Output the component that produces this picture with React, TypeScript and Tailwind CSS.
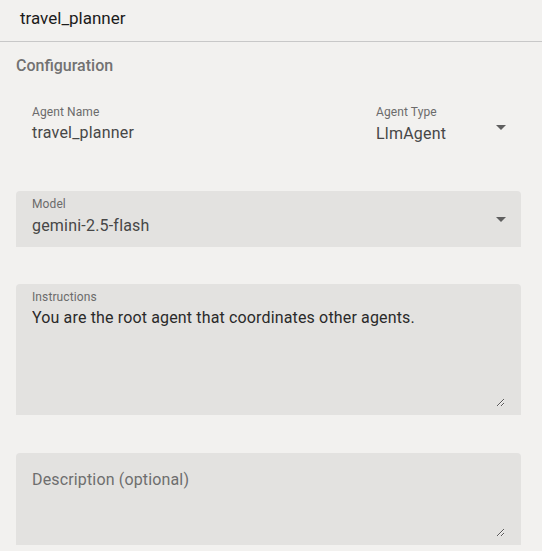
import type { ReactNode } from "react";

function Caret() {
  return (
    <svg width="10" height="5" viewBox="0 0 10 5" className="shrink-0">
      <path d="M0 0h10L5 5z" fill="#5f5f5f" />
    </svg>
  );
}

function SelectField({
  label,
  value,
  filled = false,
  className = "",
}: {
  label: string;
  value: string;
  filled?: boolean;
  className?: string;
}) {
  return (
    <div
      className={`h-14 flex items-center pl-4 pr-[15px] rounded-t ${
        filled ? "bg-[#e3e2e0]" : ""
      } ${className}`}
    >
      <div className="flex-1 min-w-0 self-start pt-[5px]">
        <div className="text-[12px] leading-4 text-[#6b6b6b] tracking-[0.1px]">{label}</div>
        <div className="mt-[2px] text-[16px] leading-6 text-[#474747] tracking-[0.2px]">
          {value}
        </div>
      </div>
      <Caret />
    </div>
  );
}

function TextField({ label, value }: { label: string; value: string }) {
  return (
    <div className="pl-4 pr-4 rounded-t">
      <div className="pt-[5px] text-[12px] leading-4 text-[#6b6b6b] tracking-[0.1px]">{label}</div>
      <div className="mt-[1px] text-[16px] leading-6 text-[#474747] tracking-[0.2px]">{value}</div>
    </div>
  );
}

function AreaField({
  label,
  children,
}: {
  label?: string;
  children: ReactNode;
}) {
  return (
    <div className="bg-[#e3e2e0] rounded-t px-4 pb-2 flex flex-col">
      {label && (
        <div className="pt-[5px] text-[12px] leading-4 text-[#6b6b6b] tracking-[0.1px]">{label}</div>
      )}
      {children}
    </div>
  );
}

export default function App() {
  return (
    <div className="min-h-screen bg-[#f2f1ef] font-['Roboto',sans-serif]">
      <div className="h-[42px] border-b border-[#c8c8c8] pl-5 pt-[6px]">
        <span className="text-[17px] leading-6 text-[#1b1b1b]">travel_planner</span>
      </div>

      <div className="pl-4 pr-[21px] pt-3">
        <div className="text-[16px] leading-6 font-medium text-[#727272]">
          Configuration
        </div>

        <div className="mt-[21px] flex gap-4 h-14">
          <div className="flex-1">
            <TextField label="Agent Name" value="travel_planner" />
          </div>
          <SelectField label="Agent Type" value="LlmAgent" className="w-[161px]" />
        </div>

        <SelectField
          label="Model"
          value="gemini-2.5-flash"
          filled
          className="mt-9"
        />

        <div className="mt-[37px]">
          <AreaField label="Instructions">
            <textarea
              className="mt-[1px] h-[101px] w-full bg-transparent outline-none resize-y text-[16px] leading-6 tracking-[0.15px] text-[#2a2a2a] block"
              defaultValue="You are the root agent that coordinates other agents."
            />
          </AreaField>
        </div>

        <div className="mt-[38px]">
          <AreaField>
            <textarea
              className="mt-[15px] h-[69px] w-full bg-transparent outline-none resize-y text-[16px] leading-6 tracking-[0.15px] text-[#2a2a2a] placeholder:text-[#6e6e6e] block"
              placeholder="Description (optional)"
            />
          </AreaField>
        </div>
      </div>
    </div>
  );
}
